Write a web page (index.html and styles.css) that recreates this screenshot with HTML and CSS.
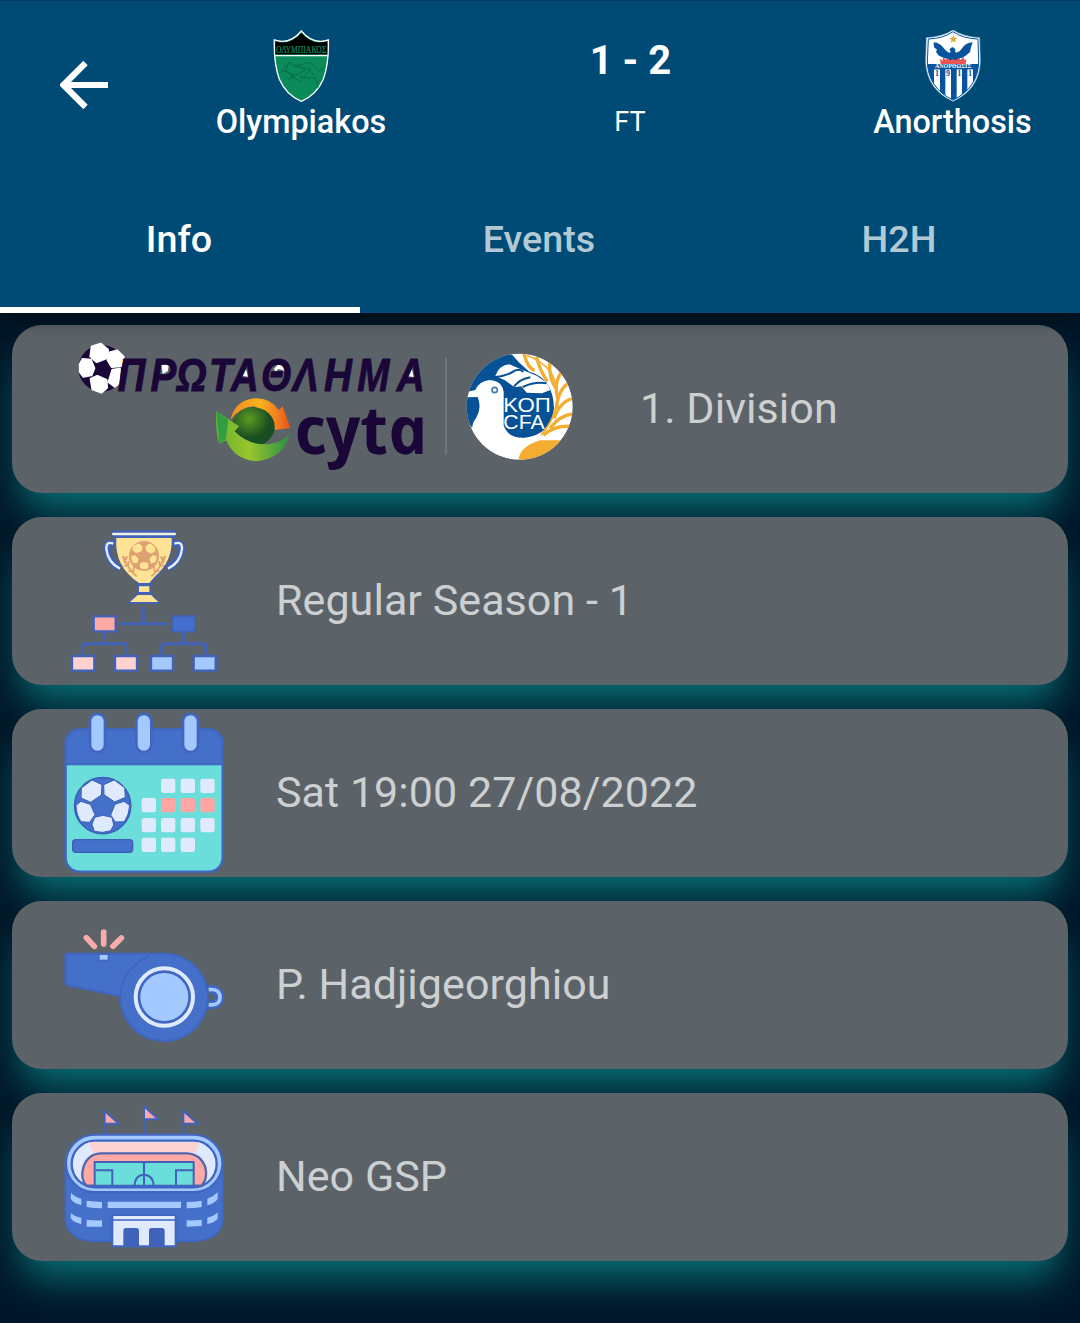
FILE: index.html
```html
<!DOCTYPE html>
<html lang="en">
<head>
<meta charset="utf-8">
<title>Olympiakos - Anorthosis</title>
<link rel="stylesheet" href="styles.css">
</head>
<body>
<header class="header">
  <div class="match">
    <div class="back">
      <svg class="back-icon" viewBox="0 0 48 48"><path d="M48 24H4M25.500 2 3.500 24 25.500 46" fill="none" stroke="#fff" stroke-width="6.200"/></svg>
    </div>
    <div class="team">
      <svg class="crest" viewBox="30 30 216 216">
        <path d="M58 60Q105 75 139 33Q173 75 220 60Q222 130 205 178Q184 226 139 244Q94 226 73 178Q56 130 58 60Z" fill="#0b8a5a" stroke="#fff" stroke-width="4"/>
        <path d="M61 64Q107 77 139 38Q171 77 217 64L217 103H61Z" fill="#000"/>
        <path d="M61 107H217" stroke="#fff" stroke-width="4"/>
        <text x="63" y="98" textLength="151" lengthAdjust="spacingAndGlyphs" font-family="Liberation Serif, serif" font-size="28" fill="#0d8a5c" stroke="#0d8a5c" stroke-width=".6">ΟΛΥΜΠΙΑΚΟΣ</text>
        <path d="M75 160L103 126L120 139L164 126L190 153L213 138M103 126L92 152L134 186L166 147L120 139M134 170L183 176L190 205M80 151L116 163L103 177L153 148M165 150L183 176" fill="none" stroke="#076746" stroke-width="2.500"/>
      </svg>
      <span class="team-name">Olympiakos</span>
    </div>
    <div class="result">
      <span class="score">1 - 2</span>
      <span class="status">FT</span>
    </div>
    <div class="team">
      <svg class="crest" viewBox="33 30 216 216">
        <defs><clipPath id="shield"><path d="M67 57Q111 56 141 35Q171 56 216 57L218 126Q215 205 141 240Q67 205 64 126Z"/></clipPath></defs>
        <path d="M61 53Q109 51 141 30Q173 51 221 53L223 126Q219 209 141 244Q63 209 59 126Z" fill="#fff" stroke="#8cb9df" stroke-width="2"/>
        <g clip-path="url(#shield)">
          <path d="M60 132H222V250H60Z" fill="#07549c"/>
          <path d="M84 148h18v100H84zm34 0h17v100h-17zm34 0h16v100h-16zm32 0h17v100h-17z" fill="#fff"/>
          <path d="M60 132H222V148H60Z" fill="#07549c"/>
        </g>
        <path d="M67 57Q111 56 141 35Q171 56 216 57L218 126Q215 205 141 240Q67 205 64 126Z" fill="none" stroke="#07549c" stroke-width="3"/>
        <path d="M83 67Q103 68 116 88Q127 101 134 97L131 87L138 82Q149 82 148 97Q158 99 167 86Q181 67 200 67L195 82L192 96L181 106L169 113Q154 115 152 124H133Q130 117 112 113L99 107L90 96L93 89L84 82Z" fill="#07549c"/>
        <path d="M104 132L102 116L109 122L112 111L119 120L125 115L132 121L141 117L150 121L158 114L164 120L172 111L176 121L181 117L179 132Z" fill="#e95455"/>
        <path d="M142 45l3 8h9l-7 6 3 9-8-5-8 5 3-9-7-6h9z" fill="#dfa62c"/>
        <text x="87" y="145" textLength="109" lengthAdjust="spacingAndGlyphs" class="crest-serif" font-size="17">ΑΝΟΡΘΩΣΙΣ</text>
        <g class="crest-year" font-size="24"><text x="87" y="167">1</text><text x="120" y="167">9</text><text x="154" y="167">1</text><text x="186" y="167">1</text></g>
      </svg>
      <span class="team-name">Anorthosis</span>
    </div>
  </div>
  <nav class="tabs">
    <a class="tab tab-active">Info</a>
    <a class="tab">Events</a>
    <a class="tab">H2H</a>
  </nav>
</header>
<main class="cards">
  <section class="card">
    <svg class="league-logo" viewBox="12 -3 1572 480">
      <defs>
        <linearGradient id="orange" x1="0" x2="1"><stop offset="0" stop-color="#f18b16"/><stop offset=".5" stop-color="#fbb321"/><stop offset="1" stop-color="#e9531b"/></linearGradient>
        <radialGradient id="green" cx=".4" cy=".3"><stop offset="0" stop-color="#5b9a20"/><stop offset="1" stop-color="#194d22"/></radialGradient>
        <linearGradient id="lime" x1="0" x2="1"><stop offset="0" stop-color="#68b130"/><stop offset=".45" stop-color="#9ac52c"/><stop offset="1" stop-color="#279147"/></linearGradient>
        <clipPath id="cfa"><circle cx="1379" cy="230" r="159"/></clipPath>
      </defs>
      <circle cx="125" cy="115" r="70" fill="#1b0638"/>
      <g fill="#fff" stroke="#fff" stroke-width="8" stroke-linejoin="round">
        <path d="M96 50L122 42L143 59L141 83L110 95L92 79Z"/>
        <path d="M149 68L171 62L190 81L182 108L156 110L144 91Z"/>
        <path d="M60 103L68 88L92 90L102 115L94 135L70 139L60 125Z"/>
        <path d="M93 147L112 139L139 151L140 173L124 187L98 177Z"/>
        <path d="M158 120L179 117L175 160L165 169L147 156Z"/>
      </g>
      <path d="M304 106l12-6 10 9-3 15-15 8zm242 31l12-20 6 23zm96-21l13-14 17 6 4 18-9-6-11-3-10 8zm304 22l12-24 11-4-7 24zm96 0l14-20 5 23z" fill="#fff"/>
      <text transform="scale(.84 1)" class="league-name" y="184" x="206 323 416 532 610 718 831 943 1062 1203">ΠΡΩΤΑΘΛΗΜΑ</text>
      <path d="M511 270Q525 210 585 205Q632 204 656 240L668 229L691 294L646 300Q634 254 582 229Q540 231 511 270Z" fill="url(#orange)"/>
      <ellipse cx="580" cy="290" rx="64" ry="58" fill="url(#green)"/>
      <path d="M469 243L537 289L524 304Q570 351 635 341Q667 335 690 312Q670 386 589 394Q522 389 499 331L478 341Q465 308 469 243Z" fill="url(#lime)"/>
      <path d="M469 243L505 270L497 328L478 341Z" fill="#319d45"/>
      <text transform="translate(715 373) skewX(12)" class="sponsor" textLength="399" lengthAdjust="spacingAndGlyphs">cyta</text>
      <path d="M1158 82V374" stroke="#73797d" stroke-width="5"/>
      <g clip-path="url(#cfa)">
        <circle cx="1379" cy="230" r="160" fill="#fff"/>
        <path d="M1218 187L1230 150L1260 100L1320 75L1355 73L1378 98L1408 125Q1480 145 1482 235Q1472 315 1395 323Q1344 326 1331 286V186Q1327 153 1290 150Q1257 153 1246 180L1224 185Z" fill="#075197"/>
        <path d="M1218 202L1253 201Q1269 238 1240 277L1236 294L1210 250Z" fill="#075197"/>
        <path d="M1306 138Q1317 106 1348 103L1393 122L1430 137L1460 158L1471 180L1446 190L1400 188L1384 169L1364 172L1335 151Z" fill="#fff"/>
        <path d="M1306 141Q1344 137 1364 122Q1382 115 1390 126M1362 170Q1380 147 1411 142M1388 171Q1425 154 1460 160" fill="none" stroke="#075197" stroke-width="6"/>
        <path d="M1376 388Q1380 350 1440 331H1505L1540 310V400H1376Z" fill="#f4ad31"/>
        <g fill="none" stroke="#f4ad31" stroke-width="10">
          <path d="M1392 72Q1404 116 1424 122M1430 80Q1438 120 1462 154M1470 96Q1465 140 1488 176M1506 124Q1480 160 1493 204M1531 156Q1494 175 1489 237M1540 205Q1501 213 1482 265M1540 252Q1500 255 1470 295M1528 289Q1480 287 1450 316"/>
          <path d="M1400 76Q1492 110 1492 197Q1488 268 1442 315" stroke-width="5"/>
        </g>
        <circle cx="1304" cy="180" r="8" fill="none" stroke="#427baf" stroke-width="5"/>
        <text class="cfa-text"><tspan x="1330" y="245" textLength="143" lengthAdjust="spacingAndGlyphs">ΚΟΠ</tspan><tspan x="1330" y="297" textLength="124" lengthAdjust="spacingAndGlyphs">CFA</tspan></text>
      </g>
    </svg>
    <span class="label">1. Division</span>
  </section>

  <section class="card">
    <svg class="icon" viewBox="42 18 480 480">
      <g fill="none" stroke="#4162b9" stroke-width="20"><path d="M194 88Q170 78 171 102Q175 143 211 160M369 88Q395 78 395 102Q389 143 352 160"/></g>
      <g fill="none" stroke="#e4edf0" stroke-width="7"><path d="M190 86Q168 77 169 102Q174 143 210 161M373 86Q397 77 396 102Q391 143 354 161"/></g>
      <path d="M190 46H374Q384 57 374 66H371Q369 146 302 205V233L333 266H231L263 233V205Q194 150 193 66H190Q180 57 190 46Z" fill="#4162b9"/>
      <path d="M190 57H374" stroke="#eff1e2" stroke-width="8" stroke-linecap="round"/>
      <path d="M199 69H365Q368 139 317 182Q304 196 298 204H267Q192 154 199 69ZM267 214H298V231H267ZM263 240H303L325 261H240Z" fill="#ffe394"/>
      <path d="M264 209H301M264 235H301" stroke="#4162b9" stroke-width="6"/>
      <circle cx="282" cy="123" r="45" fill="#dda071"/>
      <g fill="#ffe394"><path d="M249 93l17-8 12 9-3 15-16 6-12-9zM286 94l14-9 15 12 1 12-13 7-14-7zM243 124l12-4 11 12-5 13-13-2zM298 132l11-12 12 4-4 17-14 5zM270 145l12-5 13 5v15l-13 4-12-5z"/></g>
      <path d="M222 124Q231 160 260 184M218 123l6 17 8-16M222 151l13 2 1-15M235 168l15 1 2-16M342 124Q333 160 304 184M346 123l-6 17-8-16M342 151l-13 2-1-15M329 168l-15 1-2-16" fill="none" stroke="#dda071" stroke-width="5"/>
      <path d="M280 276V326M211 326H353M163 349V387M98 418V394Q98 386 107 386H222Q230 386 230 394V418M401 349V387M335 418V394Q335 386 344 386H459Q467 386 467 394V418" fill="none" stroke="#4162b9" stroke-width="9"/>
      <g stroke="#4162b9" stroke-width="7"><path d="M131 304H197V349H131Z" fill="#ffa9a6"/><path d="M367 304H435V349H367Z" fill="#4370cd"/><path d="M66 423H133V467H66ZM195 423H261V467H195Z" fill="#ffd1d1"/><path d="M303 423H369V467H303ZM431 423H497V467H431Z" fill="#a4c9ff"/></g>
    </svg>
    <span class="label">Regular Season - 1</span>
  </section>

  <section class="card">
    <svg class="icon" viewBox="42 24 480 480">
      <rect x="47" y="73" width="471" height="427" rx="42" fill="#6bdedc"/>
      <path d="M47 178V115Q47 73 89 73H476Q518 73 518 115V178Z" fill="#4470ca"/>
      <rect x="47" y="73" width="471" height="427" rx="42" fill="none" stroke="#3f66c3" stroke-width="7"/>
      <path d="M47 178H518" stroke="#3f66c3" stroke-width="6"/>
      <g fill="#a4c9ff" stroke="#3f66c3" stroke-width="8"><rect x="120" y="27" width="45" height="114" rx="22"/><rect x="259" y="27" width="45" height="114" rx="22"/><rect x="399" y="27" width="45" height="114" rx="22"/></g>
      <circle cx="158" cy="302" r="84" fill="#4470ca" stroke="#3b60b8" stroke-width="5"/>
      <g fill="#dfeaff" stroke="#3b60b8" stroke-width="3"><path d="M94 249L126 225L156 239L154 270L122 292L93 279Z"/><path d="M161 239L193 225L224 248L226 277L194 291L162 269Z"/><path d="M78 301L93 289L121 298L135 329L119 352L93 350Q79 330 78 301Z"/><path d="M182 330L195 298L222 289L239 301Q238 328 223 350L196 351Z"/><path d="M134 337L159 331L186 337L191 360L182 377Q158 386 133 379L126 358Z"/></g>
      <rect x="68" y="404" width="180" height="38" rx="9" fill="#4470ca" stroke="#3b60b8" stroke-width="4"/>
      <g fill="#dfeaff"><rect x="333" y="221" width="43" height="43" rx="7"/><rect x="392" y="221" width="43" height="43" rx="7"/><rect x="451" y="221" width="43" height="43" rx="7"/><rect x="275" y="279" width="43" height="43" rx="7"/><rect x="275" y="339" width="43" height="43" rx="7"/><rect x="333" y="339" width="43" height="43" rx="7"/><rect x="392" y="339" width="43" height="43" rx="7"/><rect x="451" y="339" width="43" height="43" rx="7"/><rect x="275" y="398" width="43" height="43" rx="7"/><rect x="333" y="398" width="43" height="43" rx="7"/><rect x="392" y="398" width="43" height="43" rx="7"/></g>
      <g fill="#ffa6a4"><rect x="333" y="279" width="43" height="43" rx="7"/><rect x="392" y="279" width="43" height="43" rx="7"/><rect x="451" y="279" width="43" height="43" rx="7"/></g>
    </svg>
    <span class="label">Sat 19:00 27/08/2022</span>
  </section>

  <section class="card">
    <svg class="icon" viewBox="42 -30 480 480">
      <path d="M476 224Q508 220 508 247Q508 273 476 269" fill="none" stroke="#3f66c3" stroke-width="27"/>
      <path d="M476 224Q510 220 510 247Q510 273 476 269" fill="none" stroke="#a4c9ff" stroke-width="11"/>
      <path d="M51 116H345V260H290L210 243L53 211Q46 209 46 202V121Q46 116 51 116Z" fill="#4470ca" stroke="#3f66c3" stroke-width="6"/>
      <circle cx="343" cy="247" r="131" fill="#4470ca"/>
      <path d="M300 123A131 131 0 1 0 343 116" fill="none" stroke="#3f66c3" stroke-width="6"/>
      <circle cx="343" cy="246" r="86" fill="#3f66c3" stroke="#dfeaff" stroke-width="12"/>
      <circle cx="343" cy="246" r="72" fill="#a4c9ff"/>
      <path d="M144 117H178V132Q178 139 171 139H151Q144 139 144 132Z" fill="#3f66c3"/><path d="M149 120H173V134H149Z" fill="#a4c9ff"/>
      <path d="M109 68L133 94M161 51V87M214 69L189 94" stroke="#f8acaa" stroke-width="17" stroke-linecap="round"/>
    </svg>
    <span class="label">P. Hadjigeorghiou</span>
  </section>

  <section class="card">
    <svg class="icon" viewBox="42 6 480 480">
      <g stroke="#4162b9" stroke-width="6" fill="#f8a9af"><path d="M164 116V48L207 86H164M282 116V34L325 73H282M400 116V48L443 86H400"/></g>
      <path d="M46 203V375Q57 438 137 439H430Q512 434 519 375V203Z" fill="#4470ca" stroke="#3f66c3" stroke-width="5"/>
      <rect x="48" y="119" width="469" height="172" rx="86" fill="#a4c9ff" stroke="#3f66c3" stroke-width="6"/>
      <rect x="65" y="137" width="435" height="140" rx="70" fill="#dfeaff" stroke="#3f66c3" stroke-width="7"/>
      <path d="M115 142H449L436 173H130Z" fill="#ffd1d1"/>
      <path d="M110 272Q90 253 100 217Q114 175 155 175H411Q452 177 466 217Q474 252 455 272Z" fill="#ffa9a6" stroke="#5266ad" stroke-width="7"/>
      <path d="M134 201H431V272H134Z" fill="#6bdedc" stroke="#4162b9" stroke-width="6"/>
      <path d="M282 202V273M137 226H187V272M429 226H378V272M254 272Q255 240 282 239Q309 240 311 272" fill="none" stroke="#4162b9" stroke-width="6"/>
      <path d="M130 274H435" stroke="#3f66c3" stroke-width="6"/>
      <g fill="#a4c9ff"><path d="M173 320H393V339H173ZM110 317Q132 320 156 321V340Q130 340 110 336ZM410 321Q435 321 455 317V336Q435 340 410 340ZM63 293Q74 305 94 311V330Q70 325 62 311ZM472 311Q491 305 503 292V312Q494 325 472 331ZM63 354Q74 365 94 368V387Q70 383 62 369ZM472 368Q491 365 503 352V371Q494 383 472 387ZM110 374Q132 377 156 376V395H110ZM410 376Q435 377 455 374V393L410 395Z"/></g>
      <path d="M187 360H377V454H187Z" fill="#dfeaff" stroke="#3f66c3" stroke-width="6"/>
      <path d="M188 375H376" stroke="#3f66c3" stroke-width="5"/>
      <path d="M220 453V407Q220 399 228 399H258Q267 399 267 407V453ZM297 453V407Q297 399 305 399H335Q344 399 344 407V453Z" fill="#4162b9"/>
    </svg>
    <span class="label">Neo GSP</span>
  </section>
</main>
</body>
</html>
```
FILE: styles.css
```css
* { box-sizing: border-box; }

body {
  margin: 0;
  height: 1323px;
  overflow: hidden;
  background: #001729;
  font-family: Roboto, sans-serif;
  color: #fff;
}

.header {
  position: relative;
  z-index: 1;
  height: 313px;
  background: #004a76;
  border-top: 1px solid #003b60;
  box-shadow: 0 6px 18px rgba(0, 0, 0, .45);
}

.match {
  display: grid;
  grid-template-columns: 168px 266px 391px 255px;
  height: 167px;
}

.back { padding: 60px 0 0 60px; }
.back-icon { display: block; width: 48px; height: 48px; }

.team, .result {
  display: flex;
  flex-direction: column;
  align-items: center;
}

.team { padding-top: 29px; }
.crest { width: 72px; height: 72px; }
.crest-serif { font-family: "Liberation Serif", serif; font-weight: 700; fill: #fff; }
.crest-year { font-family: "Liberation Serif", serif; font-weight: 700; fill: #07549c; }
.team-name { font-size: 32.4px; font-weight: 500; line-height: 40px; }

.result { padding: 36px 0 0 1px; }
.score { padding-left: 1px; font-size: 40px; font-weight: 700; line-height: 48px; }
.status { margin-top: 20px; font-size: 27px; line-height: 34px; }

.tabs { display: flex; height: 145px; }
.tab {
  flex: 1;
  padding-right: 2px;
  border-bottom: 6px solid transparent;
  text-align: center;
  font-size: 37.7px;
  font-weight: 500;
  line-height: 143px;
  color: #b2c9d6;
}
.tab-active { color: #fff; border-bottom-color: #fff; }

.cards {
  display: flex;
  flex-direction: column;
  gap: 24px;
  padding: 12px;
}

.card {
  display: flex;
  align-items: center;
  gap: 52px;
  height: 168px;
  padding-left: 52px;
  border-radius: 30px;
  background: #5b6368;
  box-shadow: 0 27px 38px -10px #087074;
}

.icon { width: 160px; height: 160px; }
.league-logo { width: 524px; height: 160px; }
.league-name { font-family: "Liberation Sans", Arial, sans-serif; font-size: 138px; font-weight: 700; font-style: italic; fill: #1b0638; stroke: #1b0638; stroke-width: 3px; }
.sponsor { font-family: "Open Sans", sans-serif; font-size: 200px; font-weight: 700; font-style: italic; fill: #1b0638; }
.cfa-text { font-family: "Liberation Sans", Arial, sans-serif; font-size: 62px; fill: #fff; }
.label { padding-bottom: 2px; font-size: 43px; letter-spacing: .06px; color: #cdd0d1; white-space: nowrap; }
```
